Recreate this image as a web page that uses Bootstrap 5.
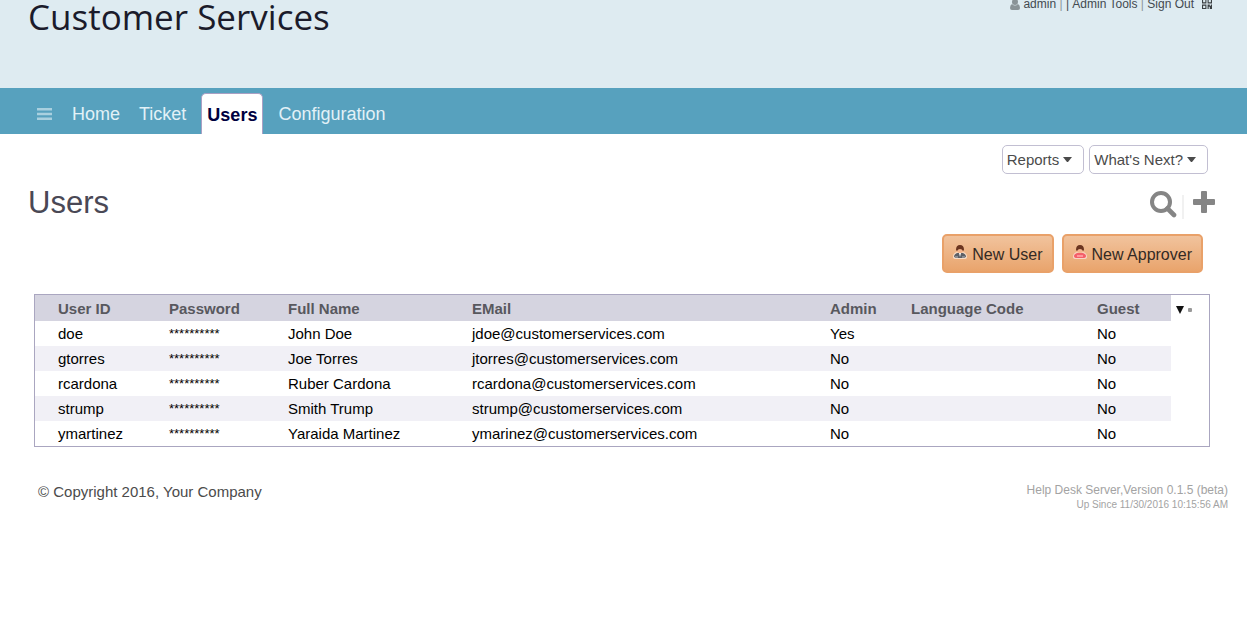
<!DOCTYPE html>
<html lang="en">
<head>
<meta charset="utf-8">
<meta name="viewport" content="width=device-width, initial-scale=1">
<title>Customer Services - Users</title>
<link rel="stylesheet" href="https://cdn.jsdelivr.net/npm/bootstrap@5.3.0/dist/css/bootstrap.min.css">
<style>
  body { font-family: "Liberation Sans", Arial, sans-serif; font-size: 15px; line-height: 20px; color: #4b4b4b; background: #fff; }
  a { color: inherit; text-decoration: none; }
  svg { display: block; flex: none; }
  .masthead { background: #deebf1; min-height: 88px; padding: 0 35px 0 28px; }
  .brand { font: 400 35px/34px "Open Sans", sans-serif; color: #1b1b2b; }
  .usermenu { font-size: 12px; line-height: 8px; height: 8px; color: #434a50; }
  .usermenu .sep { color: #8c979c; }
  .mainnav { background: #57a1be; min-height: 46px; padding: 0 37px; }
  .mainnav .nav-link { color: #e2f1f7; font-size: 18px; line-height: 20px; padding: 0 0 10px; margin-right: 15px; }
  .mainnav .nav-link.active { color: #000040; font-weight: 700; background: #fff; border: 1px solid #a9a0c4; border-bottom: 0; border-radius: 5px 5px 0 0; padding: 11px 5px 9px; }
  .mainnav .home { margin-right: 19px; }
  .menu-btn { margin-right: 20px; margin-bottom: 14px; }
  .actions { padding: 11px 39px 0; gap: 5px; }
  .btn-tool { --bs-btn-padding-x: 4px; --bs-btn-padding-y: 4px; --bs-btn-font-size: 15px; --bs-btn-line-height: 19px; --bs-btn-color: #4b4b4b; --bs-btn-border-color: #c2bfd2; --bs-btn-border-radius: 5px; --bs-btn-bg: #fff; --bs-btn-hover-border-color: #8f8bad; }
  .heading { padding: 8px 32px 0 28px; }
  .heading h1 { font-size: 31px; line-height: 42px; color: #4a4855; }
  .icon-btn { color: #858585; background: none; border: 0; padding: 0; }
  .divider { width: 2px; height: 24px; background: #f1f1f1; margin: 4px 9px 0 5px; }
  .create { padding: 10px 44px 0; }
  .btn-create { --bs-btn-padding-x: 9px; --bs-btn-font-size: 16px; --bs-btn-line-height: 21px; --bs-btn-color: #332a24; --bs-btn-border-color: #e9a169; --bs-btn-border-width: 2px; --bs-btn-border-radius: 5px; --bs-btn-hover-border-color: #d98c50; background-image: linear-gradient(#f1c39d, #e9a46c); padding-top: 8px; padding-bottom: 6px; }
  .btn-create svg { margin-bottom: 4px; }
  .grid-frame { border: 1px solid #aaa6c0; margin: 21px 37px 0 34px; }
  .users { margin: 0; table-layout: fixed; color: #000; --bs-table-color: #000; }
  .users th, .users td { border: 0; padding: 3px 0 2px; line-height: 20px; white-space: nowrap; }
  .users th { color: #58585e; background: #d5d4e0; padding: 4px 0 2px; }
  .users tr > :first-child { padding-left: 23px; }
  .users tbody tr:nth-child(even) td { background: #f1f0f6; }
  .users td.masked { font-size: 13px; }
  .c-id { width: 134px; } .c-pw { width: 119px; } .c-name { width: 184px; } .c-mail { width: 358px; }
  .c-admin { width: 81px; } .c-lang { width: 186px; }
  .grid-tools { flex: 0 0 38px; height: 26px; padding: 3px 0 0 5px; }
  .foot { padding: 35px 19px 0 38px; }
  .version { font-size: 12px; line-height: 16px; color: #a3a3a3; }
  .uptime { font-size: 10px; line-height: 14px; color: #a3a3a3; }
</style>
</head>
<body>
<header class="masthead d-flex justify-content-between align-items-start">
  <div class="brand">Customer Services</div>
  <div class="usermenu d-flex align-items-center">
    <svg width="13" height="11" viewBox="0 0 13 11" fill="#899397"><ellipse cx="5" cy="3" rx="3" ry="3"/><path d="M2 5Q0 6 0 9Q0 11 2 11H8Q10 11 10 9Q10 6 8 5Q5 8 2 5Z"/></svg>
    <a href="#">admin</a><span class="sep">&nbsp;|&nbsp;</span><span>|&nbsp;</span><a href="#">Admin Tools</a><span class="sep">&nbsp;|&nbsp;</span><a href="#">Sign Out</a>
    <a href="#" class="ms-2" aria-label="QR code"><svg width="10" height="10" viewBox="0 0 9 9" fill="#3a3f42"><path fill-rule="evenodd" d="M0 0H4V4H0ZM1 1V3H3V1ZM5 0H9V4H5ZM6 1V3H8V1ZM0 5H4V9H0ZM1 6V8H3V6ZM5 5H7V6H8V5H9V8H7V7H6V9H5ZM7 8H9V9H7Z"/></svg></a>
  </div>
</header>
<nav class="mainnav d-flex align-items-end">
  <button class="icon-btn menu-btn" aria-label="Menu"><svg width="15" height="12" viewBox="0 0 15 12" fill="#a9d0df"><path d="M0 0H15V2.4H0ZM0 4.8H15V7.2H0ZM0 9.6H15V12H0Z"/></svg></button>
  <a class="nav-link home" href="#">Home</a>
  <a class="nav-link" href="#">Ticket</a>
  <a class="nav-link active" href="#" aria-current="page">Users</a>
  <a class="nav-link" href="#">Configuration</a>
</nav>
<main>
  <div class="actions d-flex justify-content-end">
    <button class="btn btn-tool d-flex align-items-center gap-1">Reports <svg width="16" height="6" viewBox="0 0 16 6" fill="#4b4b4b"><path d="M0 0H9L5 5H4Z"/></svg></button>
    <button class="btn btn-tool d-flex align-items-center gap-1">What's Next? <svg width="16" height="6" viewBox="0 0 16 6" fill="#4b4b4b"><path d="M0 0H9L5 5H4Z"/></svg></button>
  </div>
  <div class="heading d-flex justify-content-between align-items-center">
    <h1 class="m-0 fw-normal">Users</h1>
    <div class="d-flex align-items-start pt-1">
      <button class="icon-btn" aria-label="Search"><svg width="27" height="27" viewBox="0 0 27 27" fill="none" stroke="#858585"><circle cx="11" cy="11" r="9" stroke-width="4"/><path d="M17.500 17.500L24 24" stroke-width="4.600" stroke-linecap="round"/></svg></button>
      <span class="divider"></span>
      <button class="icon-btn" aria-label="Add"><svg width="22" height="22" viewBox="0 0 22 22" fill="#858585"><rect x="8" width="6" height="22" rx="1"/><rect y="8" width="22" height="6" rx="1"/></svg></button>
    </div>
  </div>
  <div class="create d-flex justify-content-end">
    <button class="btn btn-create d-flex align-items-center gap-1 me-2"><svg width="15" height="15" viewBox="0 0 15 15"><path d="M0 12Q0 8 4 7H10Q14 8 14 12Q14 14 11 14H3Q0 14 0 12Z" fill="#f7dcc6"/><path d="M1 12Q1 9 4 8H10Q13 9 13 12L10 13H4Z" fill="#5d6066"/><path d="M6 8H8L7 12Z" fill="#fff"/><path d="M2 11H5V13H2ZM9 11H12V13H9Z" fill="#8a8d92"/><rect x="4" y="2" width="6" height="6" rx="2" fill="#f3b58c"/><path d="M3 5Q3 0 7 0Q11 0 11 5L10 6Q9 4 7 4Q5 4 4 6Z" fill="#6b3520"/></svg>New User</button>
    <button class="btn btn-create d-flex align-items-center gap-1"><svg width="15" height="15" viewBox="0 0 15 15"><path d="M0 12Q0 8 4 7H10Q14 8 14 12Q14 14 11 14H3Q0 14 0 12Z" fill="#f9d5c6"/><path d="M1 11Q1 9 4 8H10Q13 9 13 11Q13 13 10 13H4Q1 13 1 11Z" fill="#f4606a"/><path d="M4 10H10V12H4Z" fill="#ff979b"/><rect x="4" y="2" width="6" height="6" rx="2" fill="#f6b792"/><path d="M3 5Q3 0 7 0Q11 0 11 5L10 6Q9 4 7 4Q5 4 4 6Z" fill="#6b3520"/></svg>New Approver</button>
  </div>
  <div class="grid-frame d-flex">
    <div class="flex-grow-1">
      <table class="table users">
        <colgroup><col class="c-id"><col class="c-pw"><col class="c-name"><col class="c-mail"><col class="c-admin"><col class="c-lang"><col></colgroup>
        <thead><tr><th>User ID</th><th>Password</th><th>Full Name</th><th>EMail</th><th>Admin</th><th>Language Code</th><th>Guest</th></tr></thead>
        <tbody>
          <tr><td>doe</td><td class="masked">**********</td><td>John Doe</td><td>jdoe@customerservices.com</td><td>Yes</td><td></td><td>No</td></tr>
          <tr><td>gtorres</td><td class="masked">**********</td><td>Joe Torres</td><td>jtorres@customerservices.com</td><td>No</td><td></td><td>No</td></tr>
          <tr><td>rcardona</td><td class="masked">**********</td><td>Ruber Cardona</td><td>rcardona@customerservices.com</td><td>No</td><td></td><td>No</td></tr>
          <tr><td>strump</td><td class="masked">**********</td><td>Smith Trump</td><td>strump@customerservices.com</td><td>No</td><td></td><td>No</td></tr>
          <tr><td>ymartinez</td><td class="masked">**********</td><td>Yaraida Martinez</td><td>ymarinez@customerservices.com</td><td>No</td><td></td><td>No</td></tr>
        </tbody>
      </table>
    </div>
    <div class="grid-tools d-flex align-items-center">
      <button class="icon-btn" aria-label="Table options"><svg width="16" height="8" viewBox="0 0 16 8"><path d="M0 0H8L4 8Z" fill="#111"/><rect x="12" y="2" width="4" height="4" rx="1" fill="#999"/></svg></button>
    </div>
  </div>
</main>
<footer class="foot d-flex justify-content-between">
  <div>© Copyright 2016, Your Company</div>
  <div class="text-end"><div class="version">Help Desk Server,Version 0.1.5 (beta)</div><div class="uptime">Up Since 11/30/2016 10:15:56 AM</div></div>
</footer>
<script src="https://cdn.jsdelivr.net/npm/bootstrap@5.3.0/dist/js/bootstrap.bundle.min.js"></script>
</body>
</html>
